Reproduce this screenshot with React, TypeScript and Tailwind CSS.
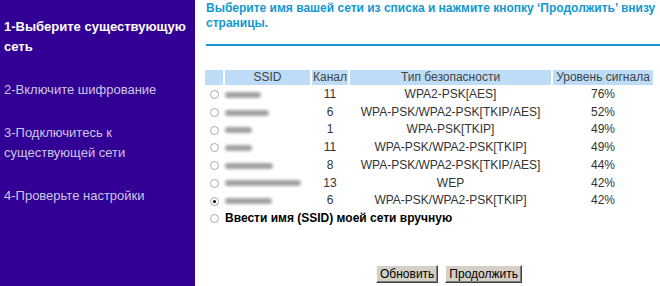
import React from "react";

const rows = [
  { w: 36, ch: "11", sec: "WPA2-PSK[AES]", sig: "76%" },
  { w: 44, ch: "6", sec: "WPA-PSK/WPA2-PSK[TKIP/AES]", sig: "52%" },
  { w: 27, ch: "1", sec: "WPA-PSK[TKIP]", sig: "49%" },
  { w: 27, ch: "11", sec: "WPA-PSK/WPA2-PSK[TKIP]", sig: "49%" },
  { w: 48, ch: "8", sec: "WPA-PSK/WPA2-PSK[TKIP/AES]", sig: "44%" },
  { w: 76, ch: "13", sec: "WEP", sig: "42%" },
  { w: 47, ch: "6", sec: "WPA-PSK/WPA2-PSK[TKIP]", sig: "42%", checked: true },
];

const Radio = ({ checked }: { checked?: boolean }) => (
  <span className="inline-flex w-[9px] h-[9px] rounded-full border border-[#a9a9a9] bg-white items-center justify-center align-middle">
    {checked && <span className="w-[3px] h-[3px] rounded-full bg-black" />}
  </span>
);

const steps = [
  { text: "1-Выберите существующую сеть", active: true },
  { text: "2-Включите шифрование" },
  { text: "3-Подключитесь к существующей сети" },
  { text: "4-Проверьте настройки" },
];

export default function App() {
  return (
    <div className="w-[660px] h-[286px] flex bg-white overflow-hidden" style={{ fontFamily: '"Liberation Sans", Arial, sans-serif' }}>
      {/* Wizard steps */}
      <div className="w-[195px] h-full bg-[#320094] pl-[4px] pr-2 pt-[17px] flex flex-col gap-[23px]">
        {steps.map((s) => (
          <p
            key={s.text}
            className={`text-[13px] leading-[20px] ${s.active ? "font-bold text-white" : "text-[#cdc6e6]"}`}
          >
            {s.text}
          </p>
        ))}
      </div>

      {/* Main */}
      <div className="flex-1 pl-[11px] flex flex-col">
        <p className="text-[12px] leading-[15px] font-bold text-[#1398d2] pt-[1px] whitespace-nowrap">
          Выберите имя вашей сети из списка и нажмите кнопку ‘Продолжить’ внизу
          <br />
          страницы.
        </p>
        <div className="h-[2px] bg-[#1d94cc] mt-[13px]" />

        <table className="mt-[22px] ml-[-3px] w-[452px] border-separate border-spacing-[2px] text-[12px] text-[#333] leading-[15.7px]">
          <thead>
            <tr className="bg-[#bcdcf8] text-[#444] h-[15px]">
              <th className="w-[18px] font-normal leading-[15px]" />
              <th className="w-[85px] font-normal leading-[15px]">SSID</th>
              <th className="w-[36px] font-normal leading-[15px]">Канал</th>
              <th className="w-[201px] font-normal leading-[15px]">Тип безопасности</th>
              <th className="font-normal leading-[15px]">Уровень сигнала</th>
            </tr>
          </thead>
          <tbody>
            {rows.map((r, i) => (
              <tr key={i}>
                <td className="text-center">
                  <Radio checked={r.checked} />
                </td>
                <td>
                  <div
                    className="h-[6px] rounded-full bg-[#8a8a8a] blur-[1.5px] opacity-80"
                    style={{ width: r.w }}
                  />
                </td>
                <td className="text-center">{r.ch}</td>
                <td className="text-center">{r.sec}</td>
                <td className="text-center">{r.sig}</td>
              </tr>
            ))}
            <tr>
              <td className="text-center">
                <Radio />
              </td>
              <td colSpan={4} className="font-bold text-black">
                Ввести имя (SSID) моей сети вручную
              </td>
            </tr>
          </tbody>
        </table>

        <div className="mt-auto mb-[3px] flex gap-[7px] pl-[170px]">
          <button className="h-[18px] px-[3px] text-[12px] leading-none text-black bg-[#d4d0c8] border border-t-white border-l-white border-r-[#404040] border-b-[#404040] shadow-[inset_-1px_-1px_0_#808080]">
            Обновить
          </button>
          <button className="h-[18px] px-[3px] text-[12px] leading-none text-black bg-[#d4d0c8] border border-t-white border-l-white border-r-[#404040] border-b-[#404040] shadow-[inset_-1px_-1px_0_#808080]">
            Продолжить
          </button>
        </div>
      </div>
    </div>
  );
}
